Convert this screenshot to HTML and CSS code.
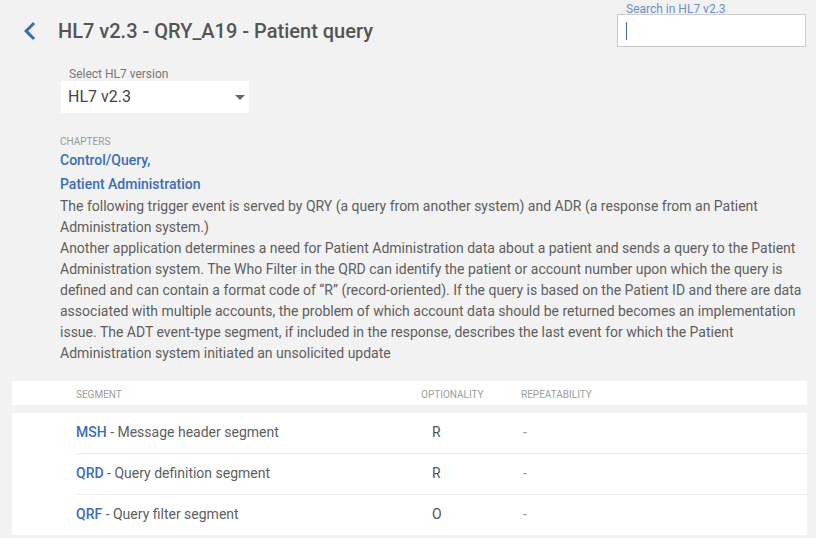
FILE: index.html
```html
<!DOCTYPE html>
<html lang="en">
<head>
<meta charset="utf-8">
<title>HL7 v2.3 - QRY_A19 - Patient query</title>
<link rel="stylesheet" href="styles.css">
</head>
<body>
<header class="topbar">
  <div class="title-group">
    <a class="back" href="#" aria-label="Back">
      <svg width="36" height="36" viewBox="0 0 24 24"><path d="M15.41 7.41L14 6l-6 6 6 6 1.41-1.41L10.83 12z" fill="#3b6db4"/></svg>
    </a>
    <h1 class="title">HL7 v2.3 - QRY_A19 - Patient query</h1>
  </div>
  <div class="search">
    <div class="search-label">Search in HL7 v2.3</div>
    <div class="search-box"><span class="caret"></span></div>
  </div>
</header>

<main class="content">
  <div class="version">
    <div class="version-label">Select HL7 version</div>
    <div class="select">
      <span class="select-value">HL7 v2.3</span>
      <span class="select-arrow"></span>
    </div>
  </div>

  <div class="chapters">
    <div class="chapters-label">CHAPTERS</div>
    <a class="chapter-link" href="#">Control/Query,</a>
    <a class="chapter-link" href="#">Patient Administration</a>
    <div class="desc">
      <p>The following trigger event is served by QRY (a query from another system) and ADR (a response from an Patient Administration system.)</p>
      <p>Another application determines a need for Patient Administration data about a patient and sends a query to the Patient Administration system. The Who Filter in the QRD can identify the patient or account number upon which the query is defined and can contain a format code of “R” (record-oriented). If the query is based on the Patient ID and there are data associated with multiple accounts, the problem of which account data should be returned becomes an implementation issue. The ADT event-type segment, if included in the response, describes the last event for which the Patient Administration system initiated an unsolicited update</p>
    </div>
  </div>
</main>

<section class="segments">
  <div class="seg-head">
    <span>SEGMENT</span>
    <span>OPTIONALITY</span>
    <span>REPEATABILITY</span>
  </div>
  <div class="seg-body">
    <div class="seg-row">
      <span class="seg-name"><b>MSH</b> - Message header segment</span>
      <span class="seg-opt">R</span>
      <span class="seg-rep">-</span>
    </div>
    <div class="seg-row">
      <span class="seg-name"><b>QRD</b> - Query definition segment</span>
      <span class="seg-opt">R</span>
      <span class="seg-rep">-</span>
    </div>
    <div class="seg-row">
      <span class="seg-name"><b>QRF</b> - Query filter segment</span>
      <span class="seg-opt">O</span>
      <span class="seg-rep">-</span>
    </div>
  </div>
</section>
</body>
</html>
```

FILE: styles.css
```css
html, body {
  margin: 0;
  padding: 0;
}
body {
  background: #f2f2f2;
  font-family: Roboto, "Noto Sans", "Liberation Sans", sans-serif;
  color: #5a5a5a;
}
a { text-decoration: none; }

.topbar {
  display: flex;
  justify-content: space-between;
  align-items: flex-start;
  padding: 2px 10px 0 12px;
}
.title-group {
  display: flex;
  align-items: center;
  gap: 10px;
  margin-top: 11px;
}
.back {
  display: block;
  width: 36px;
  height: 36px;
}
.back svg { display: block; }
.title {
  margin: 0;
  font-size: 20px;
  line-height: 24px;
  font-weight: 500;
  color: #555;
}
.search {
  width: 189px;
}
.search-label {
  font-size: 12px;
  line-height: 14px;
  height: 12px;
  color: #6a90c6;
  padding-left: 9px;
}
.search-box {
  box-sizing: border-box;
  height: 33px;
  border: 1px solid #cacaca;
  background: #fff;
  padding: 7px 0 0 8px;
}
.caret {
  display: block;
  width: 1px;
  height: 18px;
  background: #3b6db4;
}

.content {
  padding: 0 10px 0 60px;
}
.version {
  margin-top: 18px;
  margin-left: 1px;
  width: 188px;
}
.version-label {
  font-size: 12px;
  line-height: 14px;
  color: #777;
  padding-left: 8px;
}
.select {
  display: flex;
  justify-content: space-between;
  align-items: center;
  height: 32px;
  background: #fff;
  padding: 0 4px 0 7px;
}
.select-value {
  font-size: 16px;
  line-height: 32px;
  color: #444;
}
.select-arrow {
  width: 0;
  height: 0;
  border-left: 5px solid transparent;
  border-right: 5px solid transparent;
  border-top: 5px solid #666;
}

.chapters {
  margin-top: 22px;
}
.chapters-label {
  font-size: 10px;
  line-height: 14px;
  color: #9a9a9a;
  margin-bottom: -1px;
}
.chapter-link {
  display: block;
  font-size: 14px;
  line-height: 24px;
  font-weight: 500;
  color: #3b6db4;
}
.desc {
  font-size: 14px;
  line-height: 21px;
  color: #5e5e5e;
}
.desc p {
  margin: 0;
}

.segments {
  margin: 17px 9px 0 12px;
}
.seg-head {
  display: grid;
  grid-template-columns: 345px 100px 1fr;
  box-sizing: border-box;
  padding: 3px 0 0 64px;
  height: 24px;
  align-items: center;
  background: #fff;
  font-size: 10px;
  line-height: 21px;
  color: #9d9d9d;
}
.seg-body {
  margin-top: 8px;
  background: #fff;
}
.seg-row {
  display: grid;
  grid-template-columns: 345px 100px 1fr;
  margin-left: 64px;
  height: 38px;
  padding-bottom: 2px;
  align-items: center;
  font-size: 14px;
  line-height: 20px;
  border-bottom: 1px solid #ededed;
}
.seg-row:last-child {
  border-bottom: none;
}
.seg-name { color: #5e5e5e; }
.seg-name b {
  font-weight: 500;
  color: #3b6db4;
}
.seg-opt {
  padding-left: 11px;
  color: #555;
}
.seg-rep {
  padding-left: 2px;
  color: #999;
}
```
